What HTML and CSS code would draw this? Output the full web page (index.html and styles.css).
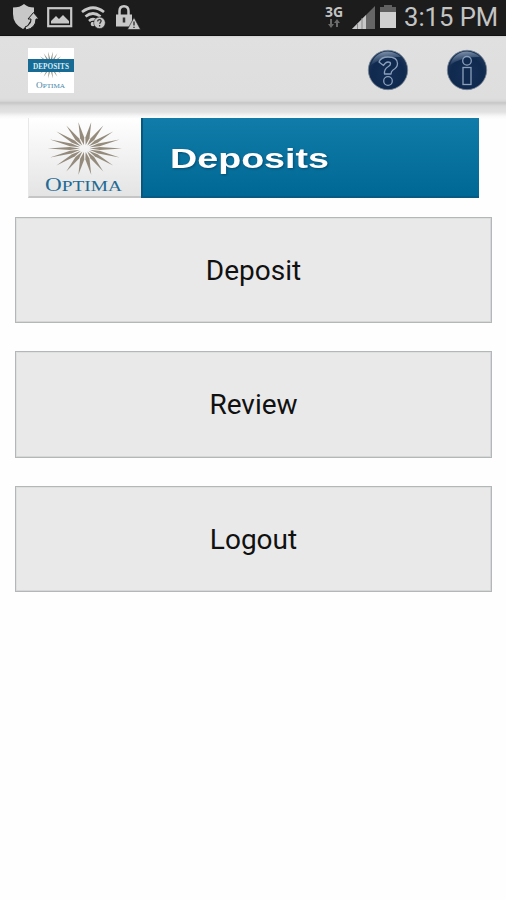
FILE: index.html
```html
<!DOCTYPE html>
<html lang="en">
<head>
<meta charset="utf-8">
<title>Optima Deposits</title>
<link rel="stylesheet" href="styles.css">
</head>
<body>
<svg class="defs" width="0" height="0" aria-hidden="true">
  <defs>
    <path id="ray" d="M5 0 L15 -2.100 L37 0 L15 2.100Z"/>
    <g id="half">
      <use href="#ray"/><use href="#ray" transform="rotate(20)"/><use href="#ray" transform="rotate(40)"/><use href="#ray" transform="rotate(60)"/><use href="#ray" transform="rotate(80)"/><use href="#ray" transform="rotate(100)"/><use href="#ray" transform="rotate(120)"/><use href="#ray" transform="rotate(140)"/><use href="#ray" transform="rotate(160)"/>
    </g>
    <g id="burst"><use href="#half"/><use href="#half" transform="rotate(180)"/></g>
    <radialGradient id="ball" cx=".5" cy=".6" r=".55"><stop offset="0" stop-color="#142f57"/><stop offset=".75" stop-color="#10294e"/><stop offset="1" stop-color="#1b3457"/></radialGradient>
    <linearGradient id="shine" x1=".2" y1="0" x2=".5" y2="1"><stop offset="0" stop-color="#a3b4ca" stop-opacity=".8"/><stop offset="1" stop-color="#6f86a6" stop-opacity="0"/></linearGradient>
  </defs>
</svg>
<header class="status">
  <div class="notices">
    <svg width="28" height="28" viewBox="0 0 28 28"><path fill="#c8c8c8" d="M13 1Q17 4.500 23 4.500V12L16 23 12 26Q2 21 2 11V4.500Q9 4.500 13 1Z"/><path d="M14 24Q20 22 20 16H17L22.500 9.500 28 16H25Q25 25 15 27Z" fill="#c8c8c8" stroke="#1c1c1c" stroke-width="1"/></svg>
    <svg width="28" height="28" viewBox="0 0 28 28"><rect x="2.200" y="5.200" width="23" height="18" fill="none" stroke="#c8c8c8" stroke-width="2.200"/><path fill="#c8c8c8" d="M5 20.500V18L10 13 13 16 17 12 23 18V20.500Z"/></svg>
    <svg width="28" height="28" viewBox="0 0 28 28"><g fill="none" stroke="#c8c8c8" stroke-width="2.700"><path d="M1 9Q12 .500 23 9M4.500 13.500Q12 7.500 19.500 13.500M8 18Q12 14.500 16 18"/></g><circle cx="12" cy="21" r="2.300" fill="#c8c8c8"/><circle cx="18.500" cy="19.800" r="5.800" fill="#c8c8c8" stroke="#1c1c1c" stroke-width=".6"/><path d="M16.500 18.300Q17 16.300 19 16.600 21 17.500 19.500 19.200L18.600 20.800M18.600 22V23.500" fill="none" stroke="#333" stroke-width="1.300"/></svg>
    <svg width="28" height="28" viewBox="0 0 28 28"><path d="M3.500 12V8Q3.500 3.200 8 3.200T12.500 8V12" fill="none" stroke="#c8c8c8" stroke-width="2.500"/><rect y="11.500" width="16" height="12" fill="#c8c8c8"/><path d="M8 14.500V19.500" stroke="#333" stroke-width="2.500"/><path d="M18 14.500 24.500 26.500H11.500Z" fill="#c8c8c8" stroke="#1c1c1c" stroke-width=".6"/><path d="M18 18.500V22.500M18 23.700V25" stroke="#333" stroke-width="1.400"/></svg>
  </div>
  <div class="system">
    <div class="net"><span>3G</span>
      <svg width="14" height="9" viewBox="0 0 14 9"><path fill="#6b6b6b" d="M3 0H5V5H7L4 9 1 5H3ZM9 8V4H7L10 0 13 4H11V8Z"/></svg>
    </div>
    <svg class="signal" width="24" height="23" viewBox="0 0 24 23"><path fill="#666" d="M23 0V23H0Z"/><path fill="#c8c8c8" d="M14 9V23H0Z"/><path d="M5.500 17V23M10 12V23" stroke="#888"/></svg>
    <svg class="battery" width="16" height="23" viewBox="0 0 16 23"><path fill="#606060" d="M0 2H4V0H12V2H16V8H0Z"/><path fill="#d0d0d0" d="M0 7H16V23H0Z"/></svg>
    <time>3:15 PM</time>
  </div>
</header>
<nav class="bar">
  <div class="appicon">
    <svg width="46" height="45" viewBox="0 0 46 45"><use href="#burst" transform="translate(22.500 17) scale(.37 .37)" fill="#8d897d"/><rect y="11" width="46" height="13" fill="#176b94"/><text class="serif" x="23" y="20.500" font-size="8" font-weight="bold" fill="#d8edf5" text-anchor="middle" textLength="36" lengthAdjust="spacingAndGlyphs">DEPOSITS</text><text class="serif" x="8" y="39.500" font-size="9" fill="#4586a8" textLength="29" lengthAdjust="spacingAndGlyphs">O<tspan font-size="7">PTIMA</tspan></text></svg>
  </div>
  <div class="actions">
    <svg width="42" height="42" viewBox="0 0 42 42"><circle cx="21" cy="21" r="19.700" fill="url(#ball)" stroke="#788594" stroke-width=".8"/><path d="M4 16Q8 3 21 2.500 29 3 34 8 17 7 4 16Z" fill="url(#shine)"/><g fill="#102a4f" stroke="#8ba0bb" stroke-width="1.300" stroke-linejoin="round"><path d="M12 13Q14 8 21 8 30.500 8 30.500 14.500 30.500 18.500 26 21 24 22.300 24 25H17.500Q17 20 21 17.800 23.500 16.300 23.500 14.700 23.500 13 21 13 18.500 13 16.500 16.500Z"/><circle cx="21" cy="32" r="4.300"/></g></svg>
    <svg width="42" height="42" viewBox="0 0 42 42"><circle cx="21" cy="21" r="19.700" fill="url(#ball)" stroke="#788594" stroke-width=".8"/><path d="M4 16Q8 3 21 2.500 29 3 34 8 17 7 4 16Z" fill="url(#shine)"/><g fill="#102a4f" stroke="#8ba0bb" stroke-width="1.300"><circle cx="21" cy="11.800" r="4.300"/><rect x="17" y="18.500" width="8" height="17"/></g></svg>
  </div>
</nav>
<main>
  <div class="banner">
    <div class="logo">
      <svg width="112" height="80" viewBox="0 0 112 80"><use href="#burst" transform="translate(55.800 30.500) scale(1 .72)" fill="#948b7c"/><text class="serif" x="16" y="73" font-size="18" fill="#236a94" textLength="77" lengthAdjust="spacingAndGlyphs">O<tspan font-size="15">PTIMA</tspan></text></svg>
    </div>
    <div class="title">
      <svg width="336" height="80" viewBox="0 0 336 80"><text class="heading" x="27" y="50" textLength="159" lengthAdjust="spacingAndGlyphs">Deposits</text></svg>
    </div>
  </div>
  <div class="menu">
    <button>Deposit</button>
    <button>Review</button>
    <button>Logout</button>
  </div>
</main>
</body>
</html>
```
FILE: styles.css
```css
* { box-sizing: border-box; }
body { margin: 0; width: 506px; height: 900px; overflow: hidden; background: #fefefe; font-family: Roboto, sans-serif; }
svg { display: block; }
.defs { position: absolute; }
.status { height: 36px; padding: 3px 10px 0 11px; display: flex; justify-content: space-between; background: #1c1c1c; border-bottom: 1px solid #111; color: #c4c4c4; }
.notices { display: flex; gap: 7px; }
.system { display: flex; align-items: flex-start; }
.net { width: 20px; margin-right: 8px; display: flex; flex-direction: column; align-items: center; font: bold 14px/15px "Open Sans", sans-serif; padding-top: 1px; }
.signal { margin: 3px 4px 0 0; }
.battery { margin: 2px 8px 0 0; }
time { font-size: 25.6px; line-height: 29px; width: 92px; white-space: nowrap; }
.bar { height: 67px; padding: 0 18px 0 28px; display: flex; justify-content: space-between; background: linear-gradient(#d2d2d2 0, #e0e0e0 2px, #dedede 62px, #d8d8d8 65px, #c4c4c4 67px); }
.appicon { width: 46px; height: 45px; margin-top: 12px; background: #fff; }
.actions { display: flex; gap: 37px; margin-top: 13px; }
main { padding: 15px 14px 0 15px; background: linear-gradient(#c8c8c8 0, #dadada 3px, #e2e2e2 9px, #f7f7f7 13px, #fefefe 16px); }
.banner { display: flex; height: 80px; margin: 0 13px; }
.logo { width: 113px; background: linear-gradient(#fff, #e4e4e4); border-left: 1px solid #e8e8e8; border-bottom: 2px solid #c5c5c5; }
.title { width: 338px; background: linear-gradient(#117ca9, #006895); border-left: 2px solid #07587f; border-bottom: 2px solid #075a82; }
.serif { font-family: "Liberation Serif", serif; }
.heading { font: bold 28px "Liberation Sans", sans-serif; fill: #fff; filter: drop-shadow(1px 1px 1px #064b6e); }
.menu { display: grid; gap: 28px; margin-top: 19px; }
button { height: 106.300px; padding: 2px 0 0; border: 1px solid #b4b7b7; box-shadow: inset -1px -1px #d6d8d8, inset 1px 1px #dedfdf; background: #e9e9e9; color: #111; font: 28px/34px Roboto, sans-serif; }
```
